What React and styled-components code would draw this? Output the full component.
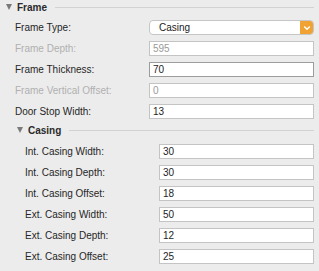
import React from "react";
import styled, { createGlobalStyle } from "styled-components";

const GlobalStyle = createGlobalStyle`
  body {
    margin: 0;
    background: #ececec;
    font-family: "Liberation Sans", Arial, sans-serif;
  }
`;

const frameFields = [
  { label: "Frame Depth:", value: "595", disabled: true },
  { label: "Frame Thickness:", value: "70", focused: true },
  { label: "Frame Vertical Offset:", value: "0", disabled: true },
  { label: "Door Stop Width:", value: "13" },
];

const casingFields = [
  { label: "Int. Casing Width:", value: "30" },
  { label: "Int. Casing Depth:", value: "30" },
  { label: "Int. Casing Offset:", value: "18" },
  { label: "Ext. Casing Width:", value: "50" },
  { label: "Ext. Casing Depth:", value: "12" },
  { label: "Ext. Casing Offset:", value: "25" },
];

const Field = ({ label, value, disabled, focused }) => (
  <>
    <Label $disabled={disabled}>{label}</Label>
    <Input $disabled={disabled} $focused={focused} readOnly value={value} />
  </>
);

export default function App() {
  return (
    <Panel>
      <GlobalStyle />
      <SectionHeader $indent={6}>
        <Triangle />
        <Title>Frame</Title>
        <Rule />
      </SectionHeader>
      <Fields $indent={15} $input={165}>
        <Label>Frame Type:</Label>
        <Select>
          <SelectText>Casing</SelectText>
          <SelectButton>
            <svg width="8" height="6" viewBox="0 0 8 6">
              <path d="M1.2 1.5 L4 4.3 L6.8 1.5" fill="none" stroke="#fff" strokeWidth="1.4" />
            </svg>
          </SelectButton>
        </Select>
        {frameFields.map((f) => (
          <Field key={f.label} {...f} />
        ))}
      </Fields>
      <SectionHeader $indent={17} $top={4}>
        <Triangle />
        <Title>Casing</Title>
        <Rule />
      </SectionHeader>
      <Fields $indent={25} $input={155} $top={7}>
        {casingFields.map((f) => (
          <Field key={f.label} {...f} />
        ))}
      </Fields>
    </Panel>
  );
}

const Panel = styled.div`
  width: 319px;
  height: 271px;
  background: #ececec;
  overflow: hidden;
`;

const SectionHeader = styled.div`
  display: flex;
  align-items: center;
  height: 14px;
  margin-top: ${(p) => p.$top || 0}px;
  padding-left: ${(p) => p.$indent}px;
  padding-right: 5px;
`;

const Triangle = styled.span`
  width: 0;
  height: 0;
  border-left: 3.5px solid transparent;
  border-right: 3.5px solid transparent;
  border-top: 6px solid #7a7a7a;
  margin-right: 5px;
`;

const Title = styled.span`
  font-size: 10px;
  font-weight: bold;
  color: #2a2a2a;
`;

const Rule = styled.div`
  flex: 1;
  height: 1px;
  background: #d2d2d2;
  margin-left: 8px;
`;

const Fields = styled.div`
  display: grid;
  grid-template-columns: 134px ${(p) => p.$input}px;
  grid-auto-rows: 15px;
  row-gap: 6px;
  align-items: center;
  margin-top: ${(p) => p.$top || 6}px;
  padding-left: ${(p) => p.$indent}px;
`;

const Label = styled.span`
  font-size: 10px;
  color: ${(p) => (p.$disabled ? "#b0b0b0" : "#262626")};
  white-space: nowrap;
`;

const Input = styled.input`
  box-sizing: border-box;
  width: 100%;
  height: 15px;
  margin: 0;
  padding: 0 3px;
  font-family: inherit;
  font-size: 10px;
  color: ${(p) => (p.$disabled ? "#9a9a9a" : "#1e1e1e")};
  background: #fff;
  border: 1px solid ${(p) => (p.$focused ? "#9c9c9c" : "#c4c4c4")};
  border-radius: 0;
  outline: none;
`;

const Select = styled.div`
  box-sizing: border-box;
  display: flex;
  align-items: center;
  height: 15px;
  background: #fff;
  border: 1px solid #c6c6c6;
  border-radius: 4px;
  overflow: hidden;
`;

const SelectText = styled.span`
  flex: 1;
  padding-left: 9px;
  font-size: 10px;
  color: #222;
`;

const SelectButton = styled.span`
  display: flex;
  align-items: center;
  justify-content: center;
  width: 13px;
  height: 100%;
  background: #f0a232;
`;
